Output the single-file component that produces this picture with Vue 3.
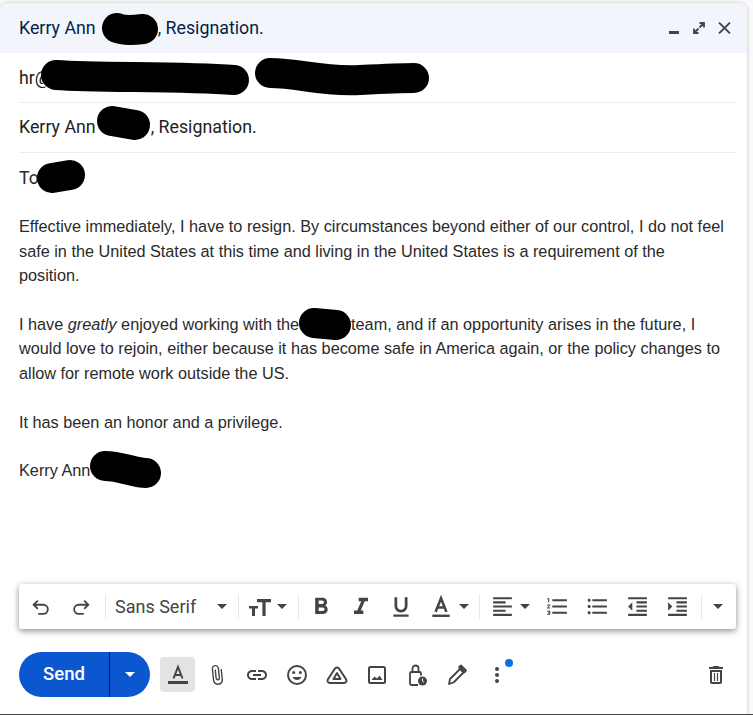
<script setup>
</script>

<template>
  <div class="page">
    <section class="window">
      <header class="head">
        <span class="head-title">Kerry Ann<i class="gap g1"></i>, Resignation.</span>
        <div class="head-icons">
          <svg viewBox="0 0 10 12" width="10" height="12"><rect y="9" width="10" height="3" fill="#444"/></svg>
          <svg viewBox="0 0 12 12" width="12" height="12"><path d="M6.500 1h4.500v4.500M11 1L6.500 5.500M1 6.500V11h4.500M1 11l4.500-4.500" fill="none" stroke="#444" stroke-width="1.800"/></svg>
          <svg viewBox="0 0 13 12" width="13" height="12"><path d="M1 .6l11 10.800M12 .6L1 11.400" fill="none" stroke="#444" stroke-width="1.900"/></svg>
        </div>
      </header>

      <div class="row">hr@</div>
      <div class="row subject">Kerry Ann<i class="gap g2"></i>, Resignation.</div>

      <div class="body">
        <p class="to">To</p>
        <p>Effective immediately, I have to resign. By circumstances beyond either of our control, I do not feel safe in the United States at this time and living in the United States is a requirement of the position.</p>
        <p>I have <em>greatly</em> enjoyed working with the<i class="gap g3"></i>team, and if an opportunity arises in the future, I would love to rejoin, either because it has become safe in America again, or the policy changes to allow for remote work outside the US.</p>
        <p>It has been an honor and a privilege.</p>
        <p class="sign">Kerry Ann</p>
      </div>

      <div class="toolbar">
        <span class="tb"><svg class="s22" viewBox="0 0 24 24"><path d="M8.500 5L4 9.500 8.500 14M4 9.500h10.500a5 5 0 0 1 0 10H9" fill="none" stroke="#444" stroke-width="2"/></svg></span>
        <span class="tb"><svg class="s22" viewBox="0 0 24 24"><path d="M15.500 5L20 9.500 15.500 14M20 9.500H9.500a5 5 0 0 0 0 10H15" fill="none" stroke="#444" stroke-width="2"/></svg></span>
        <span class="div d1"></span>
        <span class="font">Sans Serif</span>
        <span class="caret c1"></span>
        <span class="div d2"></span>
        <span class="tb tt"><svg class="s24" viewBox="0 0 24 24"><path d="M9 4h14v3.200h-5.400V21h-3.200V7.200H9zM1 11h9v2.600H7V21H4v-7.400H1z" fill="#444"/></svg></span>
        <span class="caret c2"></span>
        <span class="div d3"></span>
        <span class="tb b1"><svg class="s28" viewBox="0 0 24 24"><path d="M15.600 10.790c.97-.67 1.650-1.770 1.650-2.790 0-2.260-1.750-4-4-4H7v14h7.040c2.090 0 3.710-1.700 3.710-3.790 0-1.520-.86-2.820-2.150-3.420zM10 6.500h3c.83 0 1.500.67 1.500 1.500s-.67 1.500-1.500 1.500h-3v-3zm3.500 9H10v-3h3.500c.83 0 1.500.67 1.500 1.500s-.67 1.500-1.500 1.500z" fill="#444"/></svg></span>
        <span class="tb"><svg class="s28" viewBox="0 0 24 24"><path d="M10 4v3h2.210l-3.420 8H6v3h8v-3h-2.210l3.420-8H18V4z" fill="#444"/></svg></span>
        <span class="tb"><svg class="s26" viewBox="0 0 24 24"><path d="M12 17c3.310 0 6-2.690 6-6V3h-2.500v8c0 1.930-1.570 3.500-3.500 3.500S8.500 12.930 8.500 11V3H6v8c0 3.310 2.690 6 6 6zm-7 2v2h14v-2H5z" fill="#444"/></svg></span>
        <span class="tb"><svg class="s26" viewBox="0 0 24 24"><path d="M7 16.500L12 4l5 12.500M8.500 12.500h7" fill="none" stroke="#444" stroke-width="2.400"/><rect x="4" y="19" width="16" height="2.200" fill="#444"/></svg></span>
        <span class="caret c3"></span>
        <span class="div d4"></span>
        <span class="tb b2"><svg class="s25" viewBox="0 0 24 24"><path d="M15 15H3v2h12v-2zm0-8H3v2h12V7zM3 13h18v-2H3v2zm0 8h18v-2H3v2zM3 3v2h18V3H3z" fill="#444"/></svg></span>
        <span class="caret c3"></span>
        <span class="tb b3"><svg class="s25" viewBox="0 0 24 24"><path d="M2 17h2v.5H3v1h1v.5H2v1h3v-4H2v1zm1-9h1V4H2v1h1v3zm-1 3h1.800L2 13.100v.9h3v-1H3.200L5 10.900V10H2v1zm5-6v2h14V5H7zm0 14h14v-2H7v2zm0-6h14v-2H7v2z" fill="#444"/></svg></span>
        <span class="tb"><svg class="s25" viewBox="0 0 24 24"><path d="M4 10.500c-.83 0-1.500.67-1.500 1.500s.67 1.500 1.500 1.500 1.500-.67 1.500-1.500-.67-1.500-1.500-1.500zm0-6c-.83 0-1.500.67-1.500 1.500S3.170 7.500 4 7.500 5.500 6.830 5.500 6 4.830 4.500 4 4.500zm0 12c-.83 0-1.500.68-1.500 1.500s.68 1.500 1.500 1.500 1.500-.68 1.500-1.500-.67-1.500-1.500-1.500zM7 19h14v-2H7v2zm0-6h14v-2H7v2zm0-8v2h14V5H7z" fill="#444"/></svg></span>
        <span class="tb"><svg class="s25" viewBox="0 0 24 24"><path d="M11 17h10v-2H11v2zm-8-5l4 4V8l-4 4zm0 9h18v-2H3v2zM3 3v2h18V3H3zm8 6h10V7H11v2zm0 4h10v-2H11v2z" fill="#444"/></svg></span>
        <span class="tb"><svg class="s25" viewBox="0 0 24 24"><path d="M3 21h18v-2H3v2zM3 8v8l4-4-4-4zm8 9h10v-2H11v2zM3 3v2h18V3H3zm8 6h10V7H11v2zm0 4h10v-2H11v2z" fill="#444"/></svg></span>
        <span class="div d5"></span>
        <span class="caret c4"></span>
      </div>

      <footer class="foot">
        <div class="send">
          <span class="send-label">Send</span>
          <span class="send-more"><span class="caret white"></span></span>
        </div>
        <span class="fmt">
          <svg viewBox="0 0 24 24" width="24" height="24"><path d="M7.500 15.500L12 4l4.500 11.500M9 12h6" fill="none" stroke="#444" stroke-width="2"/><rect x="2" y="18" width="20" height="3" fill="#444"/></svg>
        </span>
        <span class="fb first"><svg class="s24" viewBox="0 0 24 24"><path d="M16.500 6v11.500c0 2.210-1.790 4-4 4s-4-1.790-4-4V5c0-1.380 1.120-2.500 2.500-2.500s2.500 1.120 2.500 2.500v10.500c0 .55-.45 1-1 1s-1-.45-1-1V6H10v9.500c0 1.380 1.120 2.500 2.500 2.500s2.500-1.120 2.500-2.500V5c0-2.210-1.790-4-4-4S7 2.790 7 5v12.500c0 3.040 2.460 5.500 5.500 5.500s5.500-2.460 5.500-5.500V6h-1.500z" fill="#444" transform="rotate(-6 12 12) scale(.92) translate(1 1)"/></svg></span>
        <span class="fb"><svg class="s24" viewBox="0 0 24 24"><path d="M3.900 12c0-1.710 1.390-3.100 3.100-3.100h4V7H7c-2.760 0-5 2.240-5 5s2.240 5 5 5h4v-1.900H7c-1.710 0-3.100-1.390-3.100-3.100zM8 13h8v-2H8v2zm9-6h-4v1.900h4c1.710 0 3.100 1.390 3.100 3.100s-1.390 3.100-3.100 3.100h-4V17h4c2.760 0 5-2.240 5-5s-2.240-5-5-5z" fill="#444"/></svg></span>
        <span class="fb"><svg class="s24" viewBox="0 0 24 24"><circle cx="12" cy="12" r="9" fill="none" stroke="#444" stroke-width="2"/><circle cx="8.700" cy="9.500" r="1.500" fill="#444"/><circle cx="15.300" cy="9.500" r="1.500" fill="#444"/><path d="M7.500 14c1 2 2.500 3 4.500 3s3.500-1 4.500-3z" fill="#444"/></svg></span>
        <span class="fb"><svg class="s24" viewBox="0 0 24 24"><path d="M12 4.500c-1 0-1.700.4-2.200 1.200L2.800 16.500c-.5.800-.4 1.500 0 2.200.5.800 1.200 1.300 2.200 1.300h14c1 0 1.700-.5 2.200-1.300.4-.7.500-1.400 0-2.200L14.200 5.700c-.5-.8-1.200-1.200-2.200-1.200zM12 10l-3.500 6h7z" fill="none" stroke="#444" stroke-width="2" stroke-linejoin="round"/></svg></span>
        <span class="fb"><svg class="s24" viewBox="0 0 24 24"><rect x="4" y="4" width="16" height="16" rx="1.500" fill="none" stroke="#444" stroke-width="2"/><path d="M6.500 17l3-3.500 2.500 2 2.500-3 3 4.500z" fill="#444"/></svg></span>
        <span class="fb"><svg class="s24" viewBox="0 0 24 24"><path d="M13 22H6.500A1.500 1.500 0 0 1 5 20.500V10.500A1.500 1.500 0 0 1 6.500 9h8a1.500 1.500 0 0 1 1.500 1.500v2M7.500 9V5.500a3 3 0 0 1 6 0V9" fill="none" stroke="#444" stroke-width="1.800"/><circle cx="17.500" cy="18" r="4.500" fill="#444"/><path d="M17.500 15.500V18l1.600 1.400" fill="none" stroke="#fff"/></svg></span>
        <span class="fb"><svg class="s24" viewBox="0 0 24 24"><path d="M4 21l1-5L15 6l3.500 3.500L8.500 19.500zM13.500 4.500L16 2.500l5 5-2 2.500M14 7.500l-1-1" fill="none" stroke="#444" stroke-width="1.800" stroke-linejoin="round"/><path d="M15.500 3l5 5-2 2-5-5z" fill="#444"/></svg></span>
        <span class="fb more">
          <svg class="s24" viewBox="0 0 24 24"><circle cx="12" cy="6" r="2" fill="#444"/><circle cx="12" cy="12" r="2" fill="#444"/><circle cx="12" cy="18" r="2" fill="#444"/></svg>
          <b class="dot"></b>
        </span>
        <span class="spacer"></span>
        <span class="fb"><svg class="s24" viewBox="0 0 24 24"><path d="M6 19c0 1.100.9 2 2 2h8c1.100 0 2-.9 2-2V7H6v12zM8 9h8v10H8V9zm7.500-5l-1-1h-5l-1 1H5v2h14V4z" fill="#444"/><path d="M10.500 10v8M13.500 10v8" stroke="#444" stroke-width="1.200"/></svg></span>
      </footer>

      <svg class="ink" viewBox="0 0 753 715" width="753" height="715">
        <g fill="none" stroke="#000" stroke-width="30" stroke-linecap="round" stroke-linejoin="round">
          <path d="M117 28C124 31 135 30 143 29"/>
          <path d="M56 75C100 78 180 76 234 80"/>
          <path d="M270 73C300 73 320 82 360 80S400 78 414 78"/>
          <path d="M112 121L135 125"/>
          <path d="M52 178L70 175"/>
          <path d="M314 323L336 325"/>
          <path d="M105 466C120 466 135 473 146 473"/>
        </g>
      </svg>
    </section>
    <div class="bottom-line"></div>
  </div>
</template>

<style scoped>
.page {
  width: 753px;
  height: 715px;
  position: relative;
  overflow: hidden;
  background: #fafafa;
  padding-top: 3px;
  box-sizing: border-box;
}
.window {
  position: relative;
  width: 747px;
  height: 711px;
  background: #fff;
  border-radius: 8px 8px 0 0;
  box-shadow: 0 0 4px rgba(0, 0, 0, 0.22);
  display: flex;
  flex-direction: column;
}
.head {
  height: 50px;
  flex: none;
  background: #f2f6fc;
  border-radius: 8px 8px 0 0;
  display: flex;
  align-items: center;
  justify-content: space-between;
  padding: 0 16px 0 19px;
  font: 400 17.800px/20px Roboto, "Liberation Sans", sans-serif;
  color: #041e49;
}
.head-title { white-space: pre; }
.head-icons { display: flex; align-items: center; gap: 14px; }
.head-icons svg:last-child { margin-left: -1px; }
.gap { display: inline-block; }
.g1 { width: 62px; }
.g2 { width: 55px; }
.g3 { width: 52px; }
.row {
  height: 49px;
  flex: none;
  margin: 0 10px 0 19px;
  display: flex;
  align-items: center;
  border-bottom: 1px solid #e9edf2;
  font: 400 17.800px/20px Roboto, "Liberation Sans", sans-serif;
  color: #222;
  white-space: pre;
}
.subject { padding-bottom: 1px; height: 48px; }
.body {
  flex: 1;
  padding: 0 19px;
  font: 400 16.250px/24.400px "Liberation Sans", Arial, sans-serif;
  color: #2a2a2a;
}
.body p { margin: 0 0 24.400px; }
.body .to { font: 400 17.800px/24.400px Roboto, sans-serif; margin: 13px 0 24px; }
.toolbar {
  position: absolute;
  left: 19px;
  top: 581px;
  width: 717px;
  height: 45px;
  box-sizing: border-box;
  display: flex;
  align-items: center;
  background: #fff;
  border-radius: 3px;
  box-shadow: 0 2px 6px rgba(0, 0, 0, 0.45);
  padding-left: 2px;
}
.tb {
  width: 40px;
  height: 45px;
  flex: none;
  display: flex;
  align-items: center;
  justify-content: center;
}
.s22 { width: 22px; height: 22px; }
.s24 { width: 24px; height: 24px; }
.s25 { width: 25px; height: 25px; }
.s26 { width: 26px; height: 26px; }
.s28 { width: 28px; height: 28px; }
.div { width: 1px; height: 25px; background: #e8e8e8; flex: none; }
.d1 { margin-left: 4px; }
.d2, .d3 { margin-left: 11px; }
.d4 { margin-left: 10px; }
.d5 { margin-left: 4px; }
.font {
  width: 83px;
  flex: none;
  margin-left: 9px;
  font: 400 18px/22px Roboto, "Liberation Sans", sans-serif;
  color: #444;
  white-space: nowrap;
}
.caret {
  width: 0;
  height: 0;
  flex: none;
  border-left: 5px solid transparent;
  border-right: 5px solid transparent;
  border-top: 5px solid #444;
}
.c1 { margin-left: 19px; }
.tt { width: 24px; margin-left: 9px; }
.c2 { margin-left: 5px; }
.b1, .b2 { margin-left: 2px; }
.c3 { margin-left: -2px; }
.b3 { margin-left: 7px; }
.c4 { margin-left: 11px; }
.white { border-top-color: #fff; }
.foot {
  position: absolute;
  left: 19px;
  right: 11px;
  top: 649px;
  height: 45px;
  display: flex;
  align-items: center;
}
.send {
  width: 131px;
  height: 45px;
  flex: none;
  display: flex;
  border-radius: 23px;
  background: #0b57d0;
  color: #fff;
  font: 500 18.500px/45px Roboto, "Liberation Sans", sans-serif;
}
.send-label {
  width: 91px;
  text-align: center;
  border-right: 1px solid #041e49;
  box-sizing: border-box;
}
.send-more {
  flex: 1;
  display: flex;
  align-items: center;
  justify-content: center;
  padding-right: 1px;
}
.fmt {
  width: 35px;
  height: 35px;
  flex: none;
  margin-left: 10px;
  border-radius: 4px;
  background: #e3e3e3;
  display: flex;
  align-items: center;
  justify-content: center;
}
.fb {
  width: 40px;
  height: 40px;
  flex: none;
  display: flex;
  align-items: center;
  justify-content: center;
}
.first { margin-left: 2px; }
.more { position: relative; }
.dot {
  position: absolute;
  left: 28px;
  top: 4px;
  width: 8px;
  height: 8px;
  background: #0b6fe8;
  border-radius: 50%;
}
.spacer { flex: 1; }
.ink {
  position: absolute;
  left: 0;
  top: -3px;
  pointer-events: none;
}
.bottom-line {
  position: absolute;
  left: 0;
  right: 0;
  bottom: 0;
  height: 1px;
  background: #444;
}
</style>

<style>
html, body { margin: 0; background: #fff; }
</style>
